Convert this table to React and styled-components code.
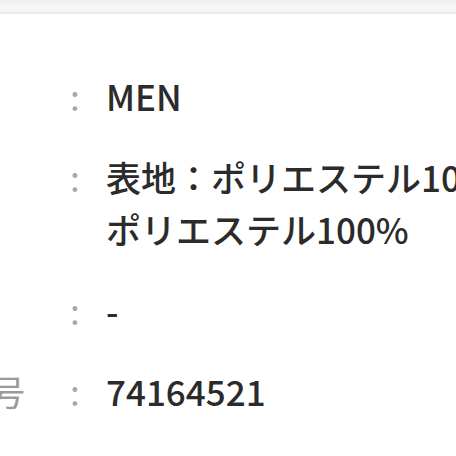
import React from 'react'
import styled, { createGlobalStyle } from 'styled-components';

const GlobalStyle = createGlobalStyle`
html, body {
  margin:0;
  padding:0;
  background:#ffffff;
  overflow:hidden;
}
body {
  font-family: "Noto Sans CJK JP", "Noto Sans", sans-serif;
}
`;

const Page = styled.div`
width:456px;
height:456px;
overflow:hidden;
background:#fff;
`;

const TopBar = styled.div`
height:12px;
background:linear-gradient(#f1f1f1 0, #f1f1f1 4px, #f6f6f6 4px);
border-bottom:2px solid #ececec;
`;

const Specs = styled.div`
display:grid;
grid-template-columns: 185px 36px 560px;
row-gap:29px;
margin-left:-115px;
padding-top:56px;
font-size:35px;
line-height:52px;
font-weight:500;
`;

const Label = styled.div`
color:#9a9a9a;
font-weight:400;
white-space:nowrap;
`;

const Colon = styled.div`
color:#a6a6a6;
font-weight:400;
`;

const Value = styled.div`
color:#2b2b2b;
white-space:nowrap;
`;

const rows = [
  { label: '対象', value: ['MEN'] },
  { label: '素材', value: ['表地：ポリエステル100%　裏地：', 'ポリエステル100%'] },
  { label: '原産国', value: ['-'] },
  { label: '商品番号', value: ['74164521'] },
];

const App = () => {
  return <Page>
    <GlobalStyle />
    <TopBar />
    <Specs>
      {rows.map((r) => (
        <React.Fragment key={r.label}>
          <Label>{r.label}</Label>
          <Colon>:</Colon>
          <Value>{r.value.map((line, i) => <div key={i}>{line}</div>)}</Value>
        </React.Fragment>
      ))}
    </Specs>
  </Page>
}

export default App
